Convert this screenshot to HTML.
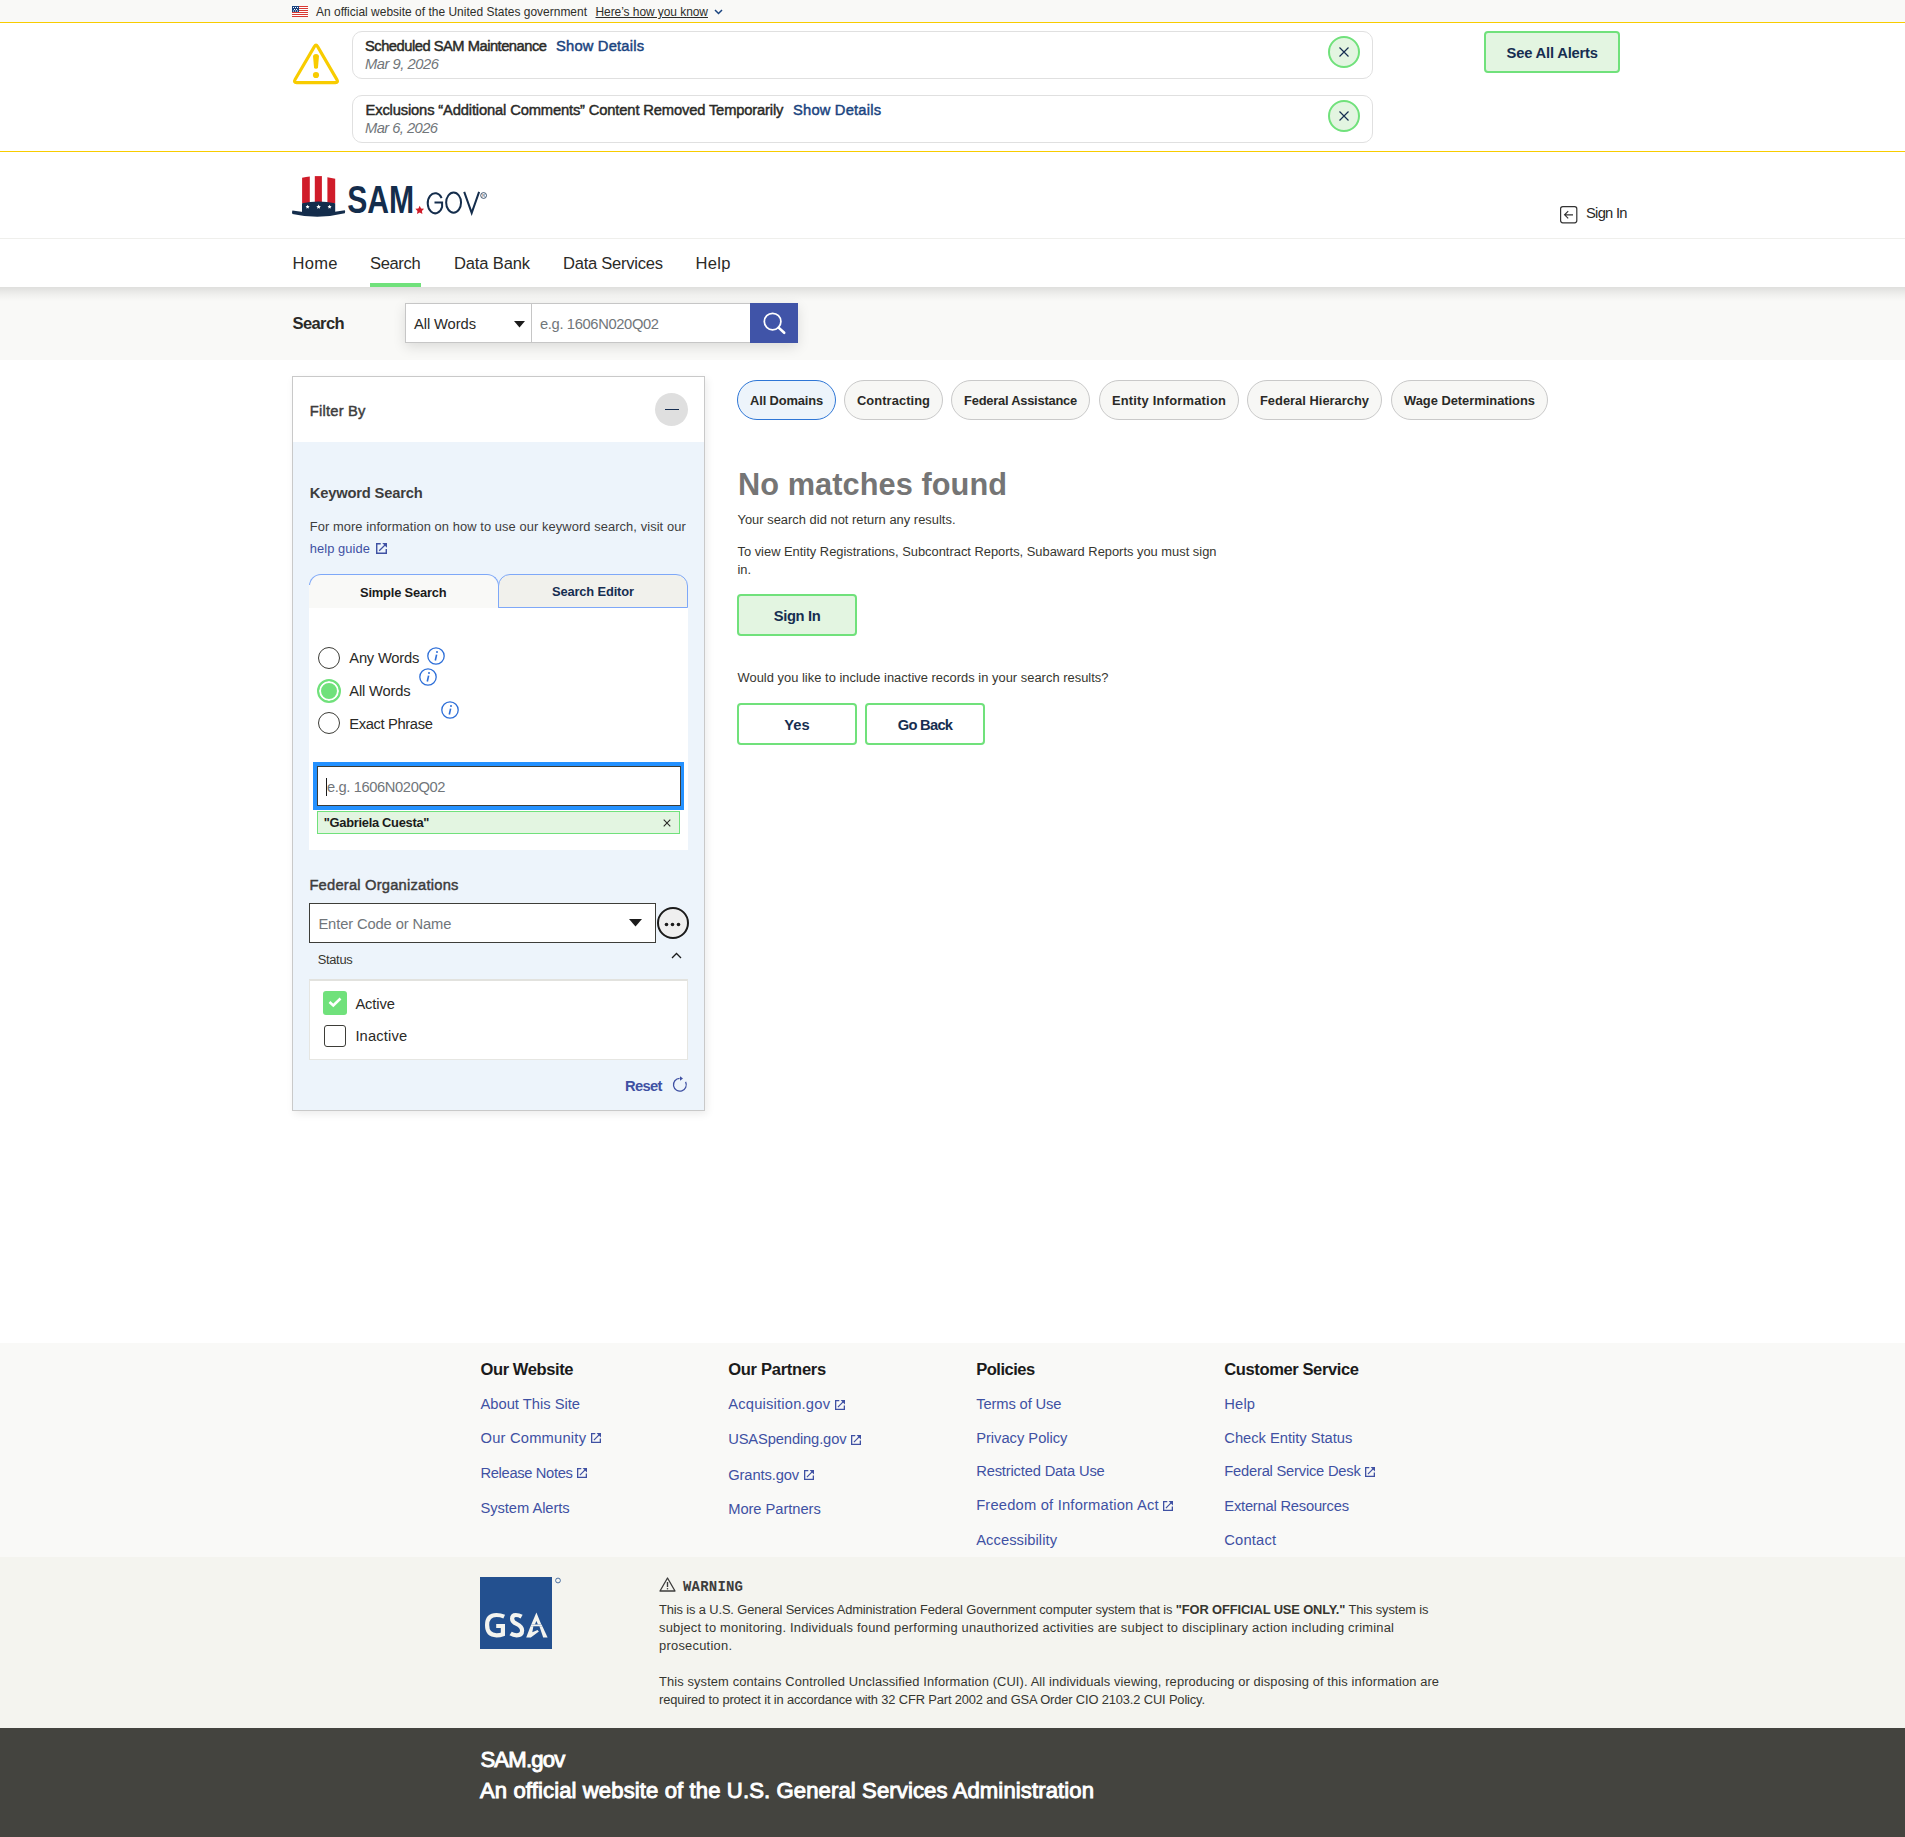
<!DOCTYPE html>
<html><head><meta charset="utf-8"><title>SAM.gov | Search</title>
<style>
html,body{margin:0;padding:0;}
body{width:1905px;height:1837px;position:relative;overflow:hidden;background:#fff;font-family:"Liberation Sans",sans-serif;color:#1b1b1b;}
.t{position:absolute;white-space:nowrap;}
.a{position:absolute;box-sizing:border-box;}
svg{position:absolute;overflow:visible;}
</style></head><body>
<!-- gov banner -->
<div class="a" style="left:0;top:0;width:1905px;height:22px;background:#f9f9f7;"></div>
<div class="a" style="left:0;top:22px;width:1905px;height:1px;background:#f8cc00;"></div>
<svg style="left:292px;top:6px" width="16" height="11" viewBox="0 0 16 11">
 <rect width="16" height="11" fill="#fff"/>
 <g fill="#d83933"><rect y="0" width="16" height="1"/><rect y="2" width="16" height="1"/><rect y="4" width="16" height="1"/><rect y="6" width="16" height="1"/><rect y="8" width="16" height="1"/><rect y="10" width="16" height="1"/></g>
 <rect width="7" height="6" fill="#1a4480"/>
 <g fill="#fff"><rect x="1" y="1" width="1" height="1"/><rect x="3" y="1" width="1" height="1"/><rect x="5" y="1" width="1" height="1"/><rect x="2" y="3" width="1" height="1"/><rect x="4" y="3" width="1" height="1"/><rect x="1" y="4.5" width="1" height="1"/><rect x="3" y="4.5" width="1" height="1"/><rect x="5" y="4.5" width="1" height="1"/></g>
</svg>
<svg style="left:714px;top:9px" width="9" height="6" viewBox="0 0 9 6"><path d="M1 1 L4.5 4.5 L8 1" fill="none" stroke="#1a4480" stroke-width="1.5"/></svg>
<!-- alerts -->
<div class="a" style="left:0;top:151px;width:1905px;height:1px;background:#f8cc00;"></div>
<svg style="left:292px;top:41px" width="48" height="44" viewBox="0 0 48 44"><path d="M22.5 5.4 Q24 2.6 25.5 5.4 L44.9 38.6 Q46.6 41.6 43.4 41.6 L4.6 41.6 Q1.4 41.6 3.1 38.6 Z" fill="none" stroke="#f8cc00" stroke-width="3.1" stroke-linejoin="round"/><path d="M21.05 15.6 Q21.05 12.9 24 12.9 Q26.95 12.9 26.95 15.6 L26 26.2 Q25.8 27.8 24 27.8 Q22.2 27.8 22 26.2 Z" fill="#f8cc00"/><circle cx="24" cy="34" r="3.1" fill="#f8cc00"/></svg>
<div class="a" style="left:352px;top:31px;width:1021px;height:48px;border:1px solid #e0e0e0;border-radius:10px;"></div>
<div class="a" style="left:352px;top:95px;width:1021px;height:48px;border:1px solid #e0e0e0;border-radius:10px;"></div>
<div class="a" style="left:1328px;top:36px;width:32px;height:32px;border:2px solid #70e17b;border-radius:50%;background:#e3f5e1;"></div>
<svg style="left:1339px;top:47px" width="10" height="10" viewBox="0 0 10 10"><path d="M0.5 0.5 L9.5 9.5 M9.5 0.5 L0.5 9.5" stroke="#162e51" stroke-width="1.2"/></svg>
<div class="a" style="left:1328px;top:100px;width:32px;height:32px;border:2px solid #70e17b;border-radius:50%;background:#e3f5e1;"></div>
<svg style="left:1339px;top:111px" width="10" height="10" viewBox="0 0 10 10"><path d="M0.5 0.5 L9.5 9.5 M9.5 0.5 L0.5 9.5" stroke="#162e51" stroke-width="1.2"/></svg>
<div class="a" style="left:1484px;top:31px;width:136px;height:42px;border:2px solid #70e17b;border-radius:4px;background:#e3f5e1;"></div>
<!-- header -->
<svg style="left:292px;top:175px" width="200" height="45" viewBox="0 0 200 45">
 <path d="M10.1 2.7 Q14 1.9 17.8 1.6 L17.8 28 L10.1 28 Z" fill="#d01c2a"/>
 <path d="M22.8 1.1 L29.9 1.1 L29.9 28 L22.8 28 Z" fill="#d01c2a"/>
 <path d="M35.4 2.2 Q39.3 2.8 43.2 3.8 L43.2 28 L35.4 28 Z" fill="#d01c2a"/>
 <path d="M10 28.2 Q26.6 24.6 43.2 28.2 L43.2 38 L10 38 Z" fill="#142d4c"/>
 <g fill="#fff">
  <path transform="translate(15.6,31.9) scale(2.1)" d="M0 -1 L0.29 -0.4 L0.95 -0.31 L0.48 0.15 L0.59 0.81 L0 0.5 L-0.59 0.81 L-0.48 0.15 L-0.95 -0.31 L-0.29 -0.4 Z"/>
  <path transform="translate(26.6,31.9) scale(2.4)" d="M0 -1 L0.29 -0.4 L0.95 -0.31 L0.48 0.15 L0.59 0.81 L0 0.5 L-0.59 0.81 L-0.48 0.15 L-0.95 -0.31 L-0.29 -0.4 Z"/>
  <path transform="translate(37.6,31.9) scale(2.1)" d="M0 -1 L0.29 -0.4 L0.95 -0.31 L0.48 0.15 L0.59 0.81 L0 0.5 L-0.59 0.81 L-0.48 0.15 L-0.95 -0.31 L-0.29 -0.4 Z"/>
 </g>
 <path d="M0.4 35.6 Q26.5 40.5 52.8 35.2 Q53.6 36.6 52.8 38.3 Q26.5 44.8 0.4 38.9 Q-0.4 37.2 0.4 35.6 Z" fill="#142d4c"/>
 <text x="55.2" y="38" font-family="Liberation Sans" font-weight="bold" font-size="38.5" fill="#142d4c" textLength="67" lengthAdjust="spacingAndGlyphs">SAM</text>
 <path transform="translate(127.7,35.3) scale(4.6)" d="M0 -1 L0.29 -0.4 L0.95 -0.31 L0.48 0.15 L0.59 0.81 L0 0.5 L-0.59 0.81 L-0.48 0.15 L-0.95 -0.31 L-0.29 -0.4 Z" fill="#d01c2a"/>
 <g fill="none" stroke="#142d4c" stroke-width="2">
  <path d="M149.6 23.2 A7.45 10.05 0 1 0 150.1 32 L150.1 27.6 L142.5 27.6"/>
  <ellipse cx="161.6" cy="27.6" rx="7.45" ry="10.05"/>
  <path d="M172.2 16.9 L179.7 37.9 L187.1 16.9"/>
  <circle cx="191.6" cy="20.5" r="2.9" stroke-width="0.8"/>
 </g>
 <text x="190.2" y="22" font-family="Liberation Sans" font-size="4" fill="#142d4c">R</text>
</svg>
<div class="a" style="left:0;top:238px;width:1905px;height:1px;background:#efefec;"></div>
<svg style="left:1560px;top:206px" width="18" height="18" viewBox="0 0 18 18"><rect x="0.6" y="0.6" width="16.2" height="16.2" rx="2.2" fill="none" stroke="#333" stroke-width="1.2"/><path d="M4.6 8.8 L13 8.8 M8.2 5.2 L4.6 8.8 L8.2 12.4" fill="none" stroke="#333" stroke-width="1.2"/></svg>
<!-- nav -->
<div class="a" style="left:370px;top:283px;width:51px;height:4px;background:#70e17b;"></div>
<!-- search bar -->
<div class="a" style="left:0;top:287px;width:1905px;height:73px;background:linear-gradient(to bottom, rgba(0,0,0,0.105) 0px, rgba(0,0,0,0.07) 4px, rgba(0,0,0,0.035) 8px, rgba(0,0,0,0.01) 12px, rgba(0,0,0,0) 15px),#f9f9f7;"></div>
<div class="a" style="left:405px;top:303px;width:393px;height:40px;box-shadow:0 4px 12px rgba(0,0,0,0.12);"></div>
<div class="a" style="left:405px;top:303px;width:127px;height:40px;background:#fff;border:1px solid #c6c6c6;"></div>
<svg style="left:514px;top:321px" width="11" height="7" viewBox="0 0 11 7"><path d="M0 0 L11 0 L5.5 6.5 Z" fill="#1b1b1b"/></svg>
<div class="a" style="left:531px;top:303px;width:220px;height:40px;background:#fff;border:1px solid #c6c6c6;"></div>
<div class="a" style="left:750px;top:303px;width:48px;height:40px;background:#4054a8;"></div>
<svg style="left:762px;top:312px" width="24" height="24" viewBox="0 0 24 24"><circle cx="10.6" cy="9.6" r="8.3" fill="none" stroke="#fff" stroke-width="1.75"/><path d="M16.6 15.6 L22.2 20.8" stroke="#fff" stroke-width="2.6" stroke-linecap="round"/></svg>
<!-- filter panel -->
<div class="a" style="left:292px;top:376px;width:413px;height:735px;border:1px solid #c9c9c9;background:#edf4fb;box-shadow:2px 3px 8px rgba(0,0,0,0.08);"></div>
<div class="a" style="left:293px;top:377px;width:411px;height:65px;background:#fff;"></div>
<div class="a" style="left:655px;top:393px;width:33px;height:33px;border-radius:50%;background:#dfdfdf;"></div>
<div class="a" style="left:665px;top:409px;width:14px;height:1.2px;background:#162e51;"></div>
<svg style="left:376px;top:543px" width="11" height="11" viewBox="0 0 10 10"><path d="M4.3 0.65 L0.65 0.65 L0.65 9.35 L9.35 9.35 L9.35 5.4" fill="none" stroke="#3f51a3" stroke-width="1.3"/><path d="M2.9 7.1 L8.3 1.7" stroke="#3f51a3" stroke-width="1.2"/><path d="M5.6 0 L10 0 L10 4.4 Z" fill="#3f51a3"/></svg>
<!-- tabs -->
<div class="a" style="left:309px;top:607px;width:379px;height:243px;background:#fff;"></div>
<div class="a" style="left:309px;top:574px;width:190px;height:34px;background:#f9f9f7;border:1px solid #7ea8f8;border-bottom:none;border-radius:12px 12px 0 0;"></div>
<div class="a" style="left:309px;top:585px;width:1px;height:23px;background:#f9f9f7;"></div>
<div class="a" style="left:498px;top:574px;width:190px;height:34px;background:#f1f1ec;border:1px solid #7ea8f8;border-radius:12px 12px 0 0;"></div>
<!-- radios -->
<div class="a" style="left:318px;top:647px;width:22px;height:22px;border:1.5px solid #3d3d38;border-radius:50%;background:#fff;"></div>
<div class="a" style="left:317px;top:679px;width:24px;height:24px;border:2px solid #70e17b;border-radius:50%;background:#70e17b;box-shadow:inset 0 0 0 2px #fff;"></div>
<div class="a" style="left:318px;top:712px;width:22px;height:22px;border:1.5px solid #3d3d38;border-radius:50%;background:#fff;"></div>
<svg style="left:427px;top:647px" width="18" height="18" viewBox="0 0 18 18"><circle cx="9" cy="9" r="8.2" fill="none" stroke="#2e6fd8" stroke-width="1.3"/><path d="M9.6 7.6 L8.3 13.5" stroke="#2e6fd8" stroke-width="1.6"/><circle cx="10" cy="5" r="1" fill="#2e6fd8"/></svg>
<svg style="left:419px;top:668px" width="18" height="18" viewBox="0 0 18 18"><circle cx="9" cy="9" r="8.2" fill="none" stroke="#2e6fd8" stroke-width="1.3"/><path d="M9.6 7.6 L8.3 13.5" stroke="#2e6fd8" stroke-width="1.6"/><circle cx="10" cy="5" r="1" fill="#2e6fd8"/></svg>
<svg style="left:441px;top:701px" width="18" height="18" viewBox="0 0 18 18"><circle cx="9" cy="9" r="8.2" fill="none" stroke="#2e6fd8" stroke-width="1.3"/><path d="M9.6 7.6 L8.3 13.5" stroke="#2e6fd8" stroke-width="1.6"/><circle cx="10" cy="5" r="1" fill="#2e6fd8"/></svg>
<!-- focused input -->
<div class="a" style="left:313px;top:762px;width:371px;height:48px;background:#2491ff;"></div>
<div class="a" style="left:316.5px;top:766px;width:364px;height:40px;background:#fff;border:1px solid #3d3d38;"></div>
<div class="a" style="left:326px;top:778px;width:1px;height:18px;background:#1b1b1b;"></div>
<div class="a" style="left:317px;top:811px;width:363px;height:23px;background:#e3f5e1;border:1px solid #70e17b;"></div>
<svg style="left:663px;top:819px" width="8" height="8" viewBox="0 0 8 8"><path d="M0.7 0.7 L7.3 7.3 M7.3 0.7 L0.7 7.3" stroke="#2a2a27" stroke-width="1.1"/></svg>
<!-- fed org -->
<div class="a" style="left:309px;top:903px;width:347px;height:40px;background:#fff;border:1px solid #3d3d38;"></div>
<svg style="left:629px;top:919px" width="13" height="8" viewBox="0 0 13 8"><path d="M0 0 L13 0 L6.5 7.5 Z" fill="#1b1b1b"/></svg>
<div class="a" style="left:656.5px;top:907px;width:32px;height:32px;border:2px solid #1b1b1b;border-radius:50%;background:#efefef;"></div>
<svg style="left:664px;top:922px" width="17" height="5" viewBox="0 0 17 5"><circle cx="2.5" cy="2.5" r="1.8" fill="#1b1b1b"/><circle cx="8.5" cy="2.5" r="1.8" fill="#1b1b1b"/><circle cx="14.5" cy="2.5" r="1.8" fill="#1b1b1b"/></svg>
<svg style="left:671px;top:952px" width="11" height="7" viewBox="0 0 11 7"><path d="M1 6 L5.5 1.5 L10 6" fill="none" stroke="#1b1b1b" stroke-width="1.3"/></svg>
<div class="a" style="left:309px;top:979px;width:379px;height:81px;background:#fff;border:1px solid #e6e6e2;border-top:2px solid #e2e2de;"></div>
<div class="a" style="left:323px;top:991px;width:24px;height:24px;border-radius:3px;background:#70e17b;"></div>
<svg style="left:327px;top:995px" width="16" height="14" viewBox="0 0 16 14"><path d="M2.5 7 L6.3 10.5 L13.5 3.5" fill="none" stroke="#fff" stroke-width="2.6"/></svg>
<div class="a" style="left:324px;top:1025px;width:22px;height:22px;border:1.5px solid #3d3d38;border-radius:3px;background:#fff;"></div>
<svg style="left:672px;top:1076px" width="16" height="16" viewBox="0 0 16 16"><path d="M13.6 5.9 A6.4 6.4 0 1 1 7.6 2.35" fill="none" stroke="#3f51a3" stroke-width="1.25"/><path d="M8 0.2 L11 2.5 L8 4.85 Z" fill="#3f51a3"/></svg>
<!-- chips -->
<div class="a" style="left:737px;top:380px;width:99px;height:40px;border:1px solid #2e76d6;border-radius:20px;background:#edf4fb;"></div>
<div class="a" style="left:844px;top:380px;width:99px;height:40px;border:1px solid #c9c9c9;border-radius:20px;background:#f7f7f5;"></div>
<div class="a" style="left:951px;top:380px;width:139px;height:40px;border:1px solid #c9c9c9;border-radius:20px;background:#f7f7f5;"></div>
<div class="a" style="left:1099px;top:380px;width:140px;height:40px;border:1px solid #c9c9c9;border-radius:20px;background:#f7f7f5;"></div>
<div class="a" style="left:1247px;top:380px;width:135px;height:40px;border:1px solid #c9c9c9;border-radius:20px;background:#f7f7f5;"></div>
<div class="a" style="left:1391px;top:380px;width:157px;height:40px;border:1px solid #c9c9c9;border-radius:20px;background:#f7f7f5;"></div>
<!-- main buttons -->
<div class="a" style="left:737px;top:594px;width:120px;height:42px;border:2px solid #70e17b;border-radius:4px;background:#e3f5e1;"></div>
<div class="a" style="left:737px;top:703px;width:120px;height:42px;border:2px solid #70e17b;border-radius:4px;background:#fff;"></div>
<div class="a" style="left:865px;top:703px;width:120px;height:42px;border:2px solid #70e17b;border-radius:4px;background:#fff;"></div>
<!-- footer -->
<div class="a" style="left:0;top:1343px;width:1905px;height:214px;background:#f9f9f7;"></div>
<div class="a" style="left:0;top:1557px;width:1905px;height:171px;background:#f4f4ef;"></div>
<div class="a" style="left:0;top:1728px;width:1905px;height:109px;background:#44443f;"></div>
<!-- GSA -->
<svg style="left:480px;top:1577px" width="82" height="72" viewBox="0 0 82 72">
 <rect x="0" y="0" width="72" height="72" fill="#23508f"/>
 <g fill="none" stroke="#f4f4ef" stroke-width="4.2">
  <path d="M24.2 39.6 Q20.5 38 16.5 38 Q7.1 38 7.1 48.1 Q7.1 58.3 16.5 58.3 Q20 58.3 22.9 57.2 L22.9 49 L16.2 49"/>
  <path d="M41.6 39.6 Q38.8 38 35.8 38 Q32.1 38 32.1 41.7 Q32.1 44.8 36.6 46.9 Q42.1 49.5 42.1 53.5 Q42.1 58.3 36.6 58.3 Q33.4 58.3 30.6 56.5"/>
 </g>
 <g fill="#f4f4ef">
  <path fill-rule="evenodd" d="M56.4 35.6 L61.3 47.4 L51.3 47.4 Z M56.4 44.1 L57.9 47.4 L54.9 47.4 Z"/>
  <path d="M51.3 47.4 L61.6 47.4 L62.4 49.2 L50.5 49.2 Z"/>
  <path d="M59.4 49.2 L62.4 49.2 L67.6 60.4 L63.2 60.4 Z"/>
  <path d="M50.5 49.2 L53.4 49.2 L52.3 55.2 L57.5 52.9 L58.9 54.6 L50.8 60.4 L46.2 60.4 Z"/>
 </g>
 <circle cx="78" cy="3.5" r="2.4" fill="none" stroke="#23508f" stroke-width="0.8"/>
</svg>
<svg style="left:659px;top:1577px" width="17" height="15" viewBox="0 0 17 15"><path d="M8.5 1 L16 14 L1 14 Z" fill="none" stroke="#3d3d3d" stroke-width="1.3" stroke-linejoin="round"/><path d="M8.5 5 L8.5 10" stroke="#3d3d3d" stroke-width="1.4"/><circle cx="8.5" cy="11.8" r="0.8" fill="#3d3d3d"/></svg>

<!-- ext icons -->
<svg style="left:590.6px;top:1433px" width="10" height="10" viewBox="0 0 10 10"><path d="M4.3 0.65 L0.65 0.65 L0.65 9.35 L9.35 9.35 L9.35 5.4" fill="none" stroke="#3f51a3" stroke-width="1.3"/><path d="M2.9 7.1 L8.3 1.7" stroke="#3f51a3" stroke-width="1.2"/><path d="M5.6 0 L10 0 L10 4.4 Z" fill="#3f51a3"/></svg>
<svg style="left:577px;top:1468px" width="10" height="10" viewBox="0 0 10 10"><path d="M4.3 0.65 L0.65 0.65 L0.65 9.35 L9.35 9.35 L9.35 5.4" fill="none" stroke="#3f51a3" stroke-width="1.3"/><path d="M2.9 7.1 L8.3 1.7" stroke="#3f51a3" stroke-width="1.2"/><path d="M5.6 0 L10 0 L10 4.4 Z" fill="#3f51a3"/></svg>
<svg style="left:834.6px;top:1400px" width="10" height="10" viewBox="0 0 10 10"><path d="M4.3 0.65 L0.65 0.65 L0.65 9.35 L9.35 9.35 L9.35 5.4" fill="none" stroke="#3f51a3" stroke-width="1.3"/><path d="M2.9 7.1 L8.3 1.7" stroke="#3f51a3" stroke-width="1.2"/><path d="M5.6 0 L10 0 L10 4.4 Z" fill="#3f51a3"/></svg>
<svg style="left:851px;top:1435px" width="10" height="10" viewBox="0 0 10 10"><path d="M4.3 0.65 L0.65 0.65 L0.65 9.35 L9.35 9.35 L9.35 5.4" fill="none" stroke="#3f51a3" stroke-width="1.3"/><path d="M2.9 7.1 L8.3 1.7" stroke="#3f51a3" stroke-width="1.2"/><path d="M5.6 0 L10 0 L10 4.4 Z" fill="#3f51a3"/></svg>
<svg style="left:803.7px;top:1470px" width="10" height="10" viewBox="0 0 10 10"><path d="M4.3 0.65 L0.65 0.65 L0.65 9.35 L9.35 9.35 L9.35 5.4" fill="none" stroke="#3f51a3" stroke-width="1.3"/><path d="M2.9 7.1 L8.3 1.7" stroke="#3f51a3" stroke-width="1.2"/><path d="M5.6 0 L10 0 L10 4.4 Z" fill="#3f51a3"/></svg>
<svg style="left:1162.6px;top:1500.8px" width="10" height="10" viewBox="0 0 10 10"><path d="M4.3 0.65 L0.65 0.65 L0.65 9.35 L9.35 9.35 L9.35 5.4" fill="none" stroke="#3f51a3" stroke-width="1.3"/><path d="M2.9 7.1 L8.3 1.7" stroke="#3f51a3" stroke-width="1.2"/><path d="M5.6 0 L10 0 L10 4.4 Z" fill="#3f51a3"/></svg>
<svg style="left:1364.8px;top:1466.5px" width="10" height="10" viewBox="0 0 10 10"><path d="M4.3 0.65 L0.65 0.65 L0.65 9.35 L9.35 9.35 L9.35 5.4" fill="none" stroke="#3f51a3" stroke-width="1.3"/><path d="M2.9 7.1 L8.3 1.7" stroke="#3f51a3" stroke-width="1.2"/><path d="M5.6 0 L10 0 L10 4.4 Z" fill="#3f51a3"/></svg>
<div class="t" style="left:316.0px;top:7px;line-height:11.96px;font-size:11.96px;font-weight:400;color:#2e2e2a;letter-spacing:0.016px;">An official website of the United States government</div>
<div class="t" style="left:595.5px;top:7px;line-height:11.96px;font-size:11.96px;font-weight:400;color:#2e2e2a;letter-spacing:-0.050px;text-decoration:underline;text-underline-offset:1px;">Here’s how you know</div>
<div class="t" style="left:365.0px;top:39px;line-height:14.72px;font-size:14.72px;font-weight:400;color:#2a2a27;-webkit-text-stroke:0.45px #2a2a27;letter-spacing:-0.497px;">Scheduled SAM Maintenance</div>
<div class="t" style="left:556.0px;top:39px;line-height:14.72px;font-size:14.72px;font-weight:400;color:#1a4480;-webkit-text-stroke:0.45px #1a4480;letter-spacing:0.190px;">Show Details</div>
<div class="t" style="left:365.0px;top:57px;line-height:14.72px;font-size:14.72px;font-weight:400;color:#71767a;font-style:italic;letter-spacing:-0.455px;">Mar 9, 2026</div>
<div class="t" style="left:365.5px;top:103px;line-height:14.72px;font-size:14.72px;font-weight:400;color:#2a2a27;-webkit-text-stroke:0.45px #2a2a27;letter-spacing:-0.149px;">Exclusions “Additional Comments” Content Removed Temporarily</div>
<div class="t" style="left:793.0px;top:103px;line-height:14.72px;font-size:14.72px;font-weight:400;color:#1a4480;-webkit-text-stroke:0.45px #1a4480;letter-spacing:0.190px;">Show Details</div>
<div class="t" style="left:365.0px;top:121px;line-height:14.72px;font-size:14.72px;font-weight:400;color:#71767a;font-style:italic;letter-spacing:-0.555px;">Mar 6, 2026</div>
<div class="t" style="left:1506.6px;top:46px;line-height:14.72px;font-size:14.72px;font-weight:700;color:#162e51;letter-spacing:-0.186px;">See All Alerts</div>
<div class="t" style="left:1586.0px;top:206px;line-height:14.72px;font-size:14.72px;font-weight:400;color:#2a2a27;letter-spacing:-0.721px;">Sign In</div>
<div class="t" style="left:292.6px;top:256px;line-height:16.56px;font-size:16.56px;font-weight:400;color:#2a2a27;letter-spacing:0.220px;">Home</div>
<div class="t" style="left:370.0px;top:256px;line-height:16.56px;font-size:16.56px;font-weight:400;color:#2a2a27;letter-spacing:-0.367px;">Search</div>
<div class="t" style="left:454.0px;top:256px;line-height:16.56px;font-size:16.56px;font-weight:400;color:#2a2a27;letter-spacing:-0.158px;">Data Bank</div>
<div class="t" style="left:563.0px;top:256px;line-height:16.56px;font-size:16.56px;font-weight:400;color:#2a2a27;letter-spacing:-0.250px;">Data Services</div>
<div class="t" style="left:695.5px;top:256px;line-height:16.56px;font-size:16.56px;font-weight:400;color:#2a2a27;letter-spacing:0.323px;">Help</div>
<div class="t" style="left:292.6px;top:316px;line-height:16.56px;font-size:16.56px;font-weight:700;color:#2a2a27;letter-spacing:-0.641px;">Search</div>
<div class="t" style="left:414.0px;top:317px;line-height:14.72px;font-size:14.72px;font-weight:400;color:#2a2a27;letter-spacing:-0.090px;">All Words</div>
<div class="t" style="left:540.0px;top:317px;line-height:14.72px;font-size:14.72px;font-weight:400;color:#71767a;letter-spacing:-0.360px;">e.g. 1606N020Q02</div>
<div class="t" style="left:786.5px;transform:translateX(-50%);top:395px;line-height:12.88px;font-size:12.88px;font-weight:700;color:#2a2a27;letter-spacing:-0.141px;">All Domains</div>
<div class="t" style="left:893.5px;transform:translateX(-50%);top:395px;line-height:12.88px;font-size:12.88px;font-weight:700;color:#2a2a27;letter-spacing:0.075px;">Contracting</div>
<div class="t" style="left:1020.5px;transform:translateX(-50%);top:395px;line-height:12.88px;font-size:12.88px;font-weight:700;color:#2a2a27;letter-spacing:-0.229px;">Federal Assistance</div>
<div class="t" style="left:1169.0px;transform:translateX(-50%);top:395px;line-height:12.88px;font-size:12.88px;font-weight:700;color:#2a2a27;letter-spacing:0.226px;">Entity Information</div>
<div class="t" style="left:1314.5px;transform:translateX(-50%);top:395px;line-height:12.88px;font-size:12.88px;font-weight:700;color:#2a2a27;letter-spacing:0.014px;">Federal Hierarchy</div>
<div class="t" style="left:1469.5px;transform:translateX(-50%);top:395px;line-height:12.88px;font-size:12.88px;font-weight:700;color:#2a2a27;letter-spacing:-0.010px;">Wage Determinations</div>
<div class="t" style="left:738.0px;top:470px;line-height:30.72px;font-size:30.72px;font-weight:700;color:#757575;letter-spacing:0.070px;">No matches found</div>
<div class="t" style="left:737.5px;top:514px;line-height:12.88px;font-size:12.88px;font-weight:400;color:#36362f;letter-spacing:0.024px;">Your search did not return any results.</div>
<div class="t" style="left:737.5px;top:546px;line-height:12.88px;font-size:12.88px;font-weight:400;color:#36362f;letter-spacing:0.003px;">To view Entity Registrations, Subcontract Reports, Subaward Reports you must sign</div>
<div class="t" style="left:737.5px;top:564px;line-height:12.88px;font-size:12.88px;font-weight:400;color:#36362f;">in.</div>
<div class="t" style="left:797.0px;transform:translateX(-50%);top:609px;line-height:14.72px;font-size:14.72px;font-weight:700;color:#162e51;letter-spacing:-0.344px;">Sign In</div>
<div class="t" style="left:737.5px;top:672px;line-height:12.88px;font-size:12.88px;font-weight:400;color:#36362f;letter-spacing:0.030px;">Would you like to include inactive records in your search results?</div>
<div class="t" style="left:797.0px;transform:translateX(-50%);top:718px;line-height:14.72px;font-size:14.72px;font-weight:700;color:#162e51;">Yes</div>
<div class="t" style="left:925.0px;transform:translateX(-50%);top:718px;line-height:14.72px;font-size:14.72px;font-weight:700;color:#162e51;letter-spacing:-0.720px;">Go Back</div>
<div class="t" style="left:309.7px;top:404px;line-height:14.72px;font-size:14.72px;font-weight:400;color:#3d3d3d;-webkit-text-stroke:0.45px #3d3d3d;letter-spacing:0.227px;">Filter By</div>
<div class="t" style="left:309.7px;top:486px;line-height:14.72px;font-size:14.72px;font-weight:700;color:#3d3d3d;letter-spacing:-0.180px;">Keyword Search</div>
<div class="t" style="left:309.7px;top:521px;line-height:12.88px;font-size:12.88px;font-weight:400;color:#3d3d3d;letter-spacing:0.085px;">For more information on how to use our keyword search, visit our</div>
<div class="t" style="left:309.7px;top:543px;line-height:12.88px;font-size:12.88px;font-weight:400;color:#3f51a3;letter-spacing:0.098px;">help guide</div>
<div class="t" style="left:360.0px;top:587px;line-height:12.88px;font-size:12.88px;font-weight:700;color:#1b1b1b;letter-spacing:-0.171px;">Simple Search</div>
<div class="t" style="left:552.0px;top:586px;line-height:12.88px;font-size:12.88px;font-weight:700;color:#162e51;letter-spacing:-0.143px;">Search Editor</div>
<div class="t" style="left:349.3px;top:651px;line-height:14.72px;font-size:14.72px;font-weight:400;color:#2a2a27;letter-spacing:-0.215px;">Any Words</div>
<div class="t" style="left:349.3px;top:684px;line-height:14.72px;font-size:14.72px;font-weight:400;color:#2a2a27;letter-spacing:-0.165px;">All Words</div>
<div class="t" style="left:349.3px;top:717px;line-height:14.72px;font-size:14.72px;font-weight:400;color:#2a2a27;letter-spacing:-0.359px;">Exact Phrase</div>
<div class="t" style="left:327.0px;top:780px;line-height:14.72px;font-size:14.72px;font-weight:400;color:#71767a;letter-spacing:-0.394px;">e.g. 1606N020Q02</div>
<div class="t" style="left:323.8px;top:817px;line-height:12.88px;font-size:12.88px;font-weight:700;color:#1b1b1b;letter-spacing:-0.291px;">"Gabriela Cuesta"</div>
<div class="t" style="left:309.4px;top:878px;line-height:14.72px;font-size:14.72px;font-weight:400;color:#3d3d3d;-webkit-text-stroke:0.45px #3d3d3d;letter-spacing:0.209px;">Federal Organizations</div>
<div class="t" style="left:318.4px;top:917px;line-height:14.72px;font-size:14.72px;font-weight:400;color:#71767a;letter-spacing:-0.117px;">Enter Code or Name</div>
<div class="t" style="left:317.7px;top:954px;line-height:12.88px;font-size:12.88px;font-weight:400;color:#36362f;letter-spacing:-0.303px;">Status</div>
<div class="t" style="left:355.4px;top:997px;line-height:14.72px;font-size:14.72px;font-weight:400;color:#2a2a27;letter-spacing:-0.119px;">Active</div>
<div class="t" style="left:355.4px;top:1029px;line-height:14.72px;font-size:14.72px;font-weight:400;color:#2a2a27;letter-spacing:0.138px;">Inactive</div>
<div class="t" style="left:625.0px;top:1079px;line-height:14.72px;font-size:14.72px;font-weight:700;color:#3f51a3;letter-spacing:-0.673px;">Reset</div>
<div class="t" style="left:480.5px;top:1362px;line-height:16.56px;font-size:16.56px;font-weight:700;color:#1b1b1b;letter-spacing:-0.416px;">Our Website</div>
<div class="t" style="left:480.5px;top:1397px;line-height:14.72px;font-size:14.72px;font-weight:400;color:#3f51a3;letter-spacing:-0.003px;">About This Site</div>
<div class="t" style="left:480.5px;top:1431px;line-height:14.72px;font-size:14.72px;font-weight:400;color:#3f51a3;letter-spacing:0.203px;">Our Community</div>
<div class="t" style="left:480.5px;top:1466px;line-height:14.72px;font-size:14.72px;font-weight:400;color:#3f51a3;letter-spacing:-0.346px;">Release Notes</div>
<div class="t" style="left:480.5px;top:1501px;line-height:14.72px;font-size:14.72px;font-weight:400;color:#3f51a3;letter-spacing:-0.065px;">System Alerts</div>
<div class="t" style="left:728.2px;top:1362px;line-height:16.56px;font-size:16.56px;font-weight:700;color:#1b1b1b;letter-spacing:-0.287px;">Our Partners</div>
<div class="t" style="left:728.2px;top:1397px;line-height:14.72px;font-size:14.72px;font-weight:400;color:#3f51a3;letter-spacing:0.200px;">Acquisition.gov</div>
<div class="t" style="left:728.2px;top:1432px;line-height:14.72px;font-size:14.72px;font-weight:400;color:#3f51a3;letter-spacing:-0.135px;">USASpending.gov</div>
<div class="t" style="left:728.2px;top:1468px;line-height:14.72px;font-size:14.72px;font-weight:400;color:#3f51a3;letter-spacing:-0.111px;">Grants.gov</div>
<div class="t" style="left:728.2px;top:1502px;line-height:14.72px;font-size:14.72px;font-weight:400;color:#3f51a3;letter-spacing:-0.054px;">More Partners</div>
<div class="t" style="left:976.2px;top:1362px;line-height:16.56px;font-size:16.56px;font-weight:700;color:#1b1b1b;letter-spacing:-0.507px;">Policies</div>
<div class="t" style="left:976.2px;top:1397px;line-height:14.72px;font-size:14.72px;font-weight:400;color:#3f51a3;letter-spacing:-0.128px;">Terms of Use</div>
<div class="t" style="left:976.2px;top:1431px;line-height:14.72px;font-size:14.72px;font-weight:400;color:#3f51a3;letter-spacing:-0.024px;">Privacy Policy</div>
<div class="t" style="left:976.2px;top:1464px;line-height:14.72px;font-size:14.72px;font-weight:400;color:#3f51a3;letter-spacing:-0.172px;">Restricted Data Use</div>
<div class="t" style="left:976.2px;top:1498px;line-height:14.72px;font-size:14.72px;font-weight:400;color:#3f51a3;letter-spacing:0.195px;">Freedom of Information Act</div>
<div class="t" style="left:976.2px;top:1533px;line-height:14.72px;font-size:14.72px;font-weight:400;color:#3f51a3;letter-spacing:0.054px;">Accessibility</div>
<div class="t" style="left:1224.3px;top:1362px;line-height:16.56px;font-size:16.56px;font-weight:700;color:#1b1b1b;letter-spacing:-0.408px;">Customer Service</div>
<div class="t" style="left:1224.3px;top:1397px;line-height:14.72px;font-size:14.72px;font-weight:400;color:#3f51a3;letter-spacing:0.140px;">Help</div>
<div class="t" style="left:1224.3px;top:1431px;line-height:14.72px;font-size:14.72px;font-weight:400;color:#3f51a3;letter-spacing:-0.024px;">Check Entity Status</div>
<div class="t" style="left:1224.3px;top:1464px;line-height:14.72px;font-size:14.72px;font-weight:400;color:#3f51a3;letter-spacing:-0.221px;">Federal Service Desk</div>
<div class="t" style="left:1224.3px;top:1499px;line-height:14.72px;font-size:14.72px;font-weight:400;color:#3f51a3;letter-spacing:-0.220px;">External Resources</div>
<div class="t" style="left:1224.3px;top:1533px;line-height:14.72px;font-size:14.72px;font-weight:400;color:#3f51a3;letter-spacing:0.161px;">Contact</div>
<div class="t" style="left:683.0px;top:1580px;line-height:14.00px;font-size:14.00px;font-weight:700;color:#3d3d3d;letter-spacing:0.198px;font-family:'Liberation Mono',monospace;">WARNING</div>
<div class="t" style="left:659.0px;top:1604px;line-height:12.88px;font-size:12.88px;font-weight:400;color:#36362f;letter-spacing:-0.125px;">This is a U.S. General Services Administration Federal Government computer system that is <b>"FOR OFFICIAL USE ONLY."</b> This system is</div>
<div class="t" style="left:659.0px;top:1622px;line-height:12.88px;font-size:12.88px;font-weight:400;color:#36362f;letter-spacing:0.218px;">subject to monitoring. Individuals found performing unauthorized activities are subject to disciplinary action including criminal</div>
<div class="t" style="left:659.0px;top:1640px;line-height:12.88px;font-size:12.88px;font-weight:400;color:#36362f;letter-spacing:0.260px;">prosecution.</div>
<div class="t" style="left:659.0px;top:1676px;line-height:12.88px;font-size:12.88px;font-weight:400;color:#36362f;letter-spacing:0.116px;">This system contains Controlled Unclassified Information (CUI). All individuals viewing, reproducing or disposing of this information are</div>
<div class="t" style="left:659.0px;top:1694px;line-height:12.88px;font-size:12.88px;font-weight:400;color:#36362f;letter-spacing:-0.142px;">required to protect it in accordance with 32 CFR Part 2002 and GSA Order CIO 2103.2 CUI Policy.</div>
<div class="t" style="left:480.4px;top:1749px;line-height:22.08px;font-size:22.08px;font-weight:400;color:#ffffff;-webkit-text-stroke:0.68px #ffffff;letter-spacing:-0.763px;-webkit-text-stroke:0.95px #ffffff;">SAM.gov</div>
<div class="t" style="left:480.0px;top:1780px;line-height:22.08px;font-size:22.08px;font-weight:400;color:#ffffff;-webkit-text-stroke:0.68px #ffffff;letter-spacing:0.112px;-webkit-text-stroke:0.95px #ffffff;">An official website of the U.S. General Services Administration</div>
</body></html>
